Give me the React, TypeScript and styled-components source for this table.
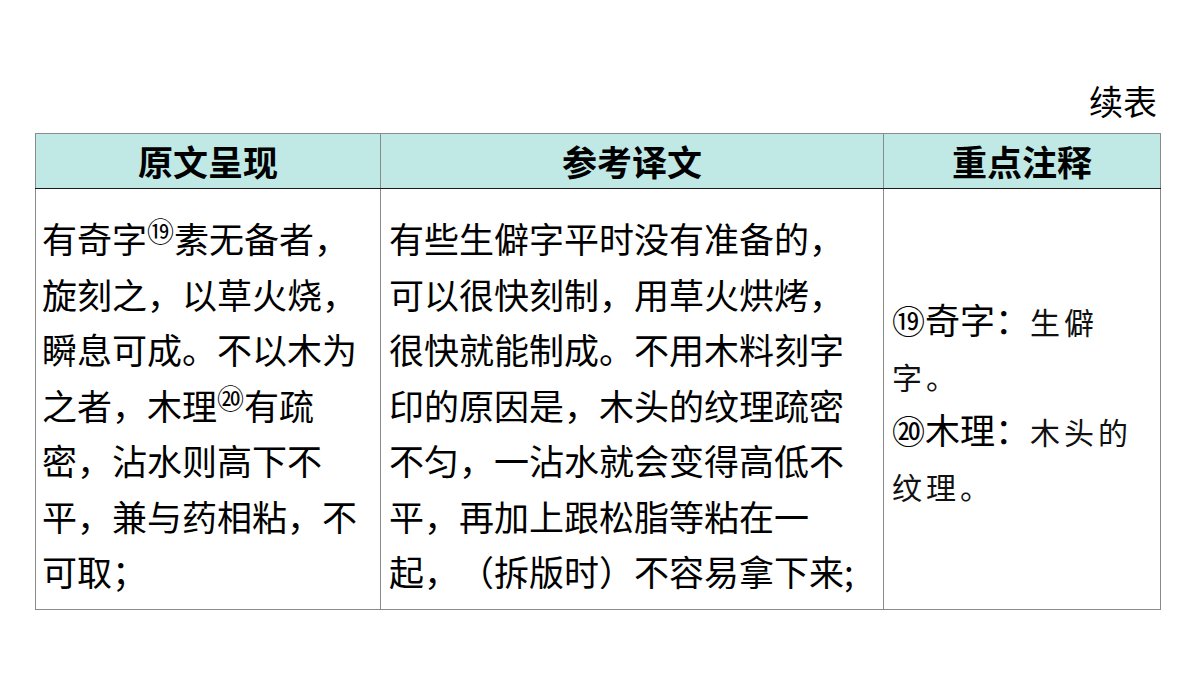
import * as React from 'react'
import styled, { createGlobalStyle } from 'styled-components'

const GlobalStyle = createGlobalStyle`
  html, body {
    margin: 0;
    padding: 0;
    background: #ffffff;
  }
  body {
    font-family: 'Noto Sans CJK SC', 'Noto Sans', sans-serif;
    color: #000000;
    text-spacing-trim: space-all;
  }
`

const Page = styled.div`
  width: 1200px;
  height: 675px;
  box-sizing: border-box;
  padding: 80px 40px 0 35px;
`

const Caption = styled.div`
  text-align: right;
  font-size: 34px;
  line-height: 42px;
  margin-bottom: 11px;
  margin-right: 3px;
`

const Table = styled.table`
  width: 1122px;
  border-collapse: collapse;
  table-layout: fixed;
`

const HeadCell = styled.th<{ $width: number }>`
  width: ${(p) => p.$width}px;
  height: 54px;
  padding: 0;
  background: #c0e9e6;
  border: 1.5px solid #8a8a8a;
  border-bottom: 1.5px solid #1a1a1a;
  font-size: 35px;
  font-weight: 700;
  line-height: 54px;
  text-align: center;
`

const BodyCell = styled.td<{ $middle?: boolean; $pad: number }>`
  height: 421px;
  box-sizing: border-box;
  padding: ${(p) => (p.$middle ? '4px' : '21px')} ${(p) => p.$pad}px 0;
  vertical-align: ${(p) => (p.$middle ? 'middle' : 'top')};
  border: 1.5px solid #8a8a8a;
  border-top: none;
  font-size: 35px;
  line-height: 55.5px;
`

const Line = styled.div`
  white-space: nowrap;
`

const NoteLine = styled.div`
  white-space: nowrap;
  height: 55px;
  line-height: 55px;
`

const Mark = styled.sup`
  font-family: 'DejaVu Serif', 'Liberation Serif', 'Noto Sans CJK SC', serif;
  font-size: 27px;
  line-height: 0;
  vertical-align: 11px;
`

const Num = styled.span`
  font-family: 'DejaVu Serif', 'Liberation Serif', 'Noto Sans CJK SC', serif;
  font-size: 33px;
  line-height: 1;
`

const Gloss = styled.span`
  font-size: 30px;
  font-weight: 400;
  letter-spacing: 4px;
  color: #111111;
  line-height: 1;
`

const original = [
  <>有奇字<Mark>⑲</Mark>素无备者，</>,
  '旋刻之，以草火烧，',
  '瞬息可成。不以木为',
  <>之者，木理<Mark>⑳</Mark>有疏</>,
  '密，沾水则高下不',
  '平，兼与药相粘，不',
  '可取；',
]

const translation = [
  '有些生僻字平时没有准备的，',
  '可以很快刻制，用草火烘烤，',
  '很快就能制成。不用木料刻字',
  '印的原因是，木头的纹理疏密',
  '不匀，一沾水就会变得高低不',
  '平，再加上跟松脂等粘在一',
  '起，（拆版时）不容易拿下来;',
]

const App = () => {
  return (
    <Page>
      <GlobalStyle />
      <Caption>续表</Caption>
      <Table>
        <thead>
          <tr>
            <HeadCell $width={344}>原文呈现</HeadCell>
            <HeadCell $width={502}>参考译文</HeadCell>
            <HeadCell $width={276}>重点注释</HeadCell>
          </tr>
        </thead>
        <tbody>
          <tr>
            <BodyCell $pad={6}>
              {original.map((l, i) => (
                <Line key={i}>{l}</Line>
              ))}
            </BodyCell>
            <BodyCell $pad={8}>
              {translation.map((l, i) => (
                <Line key={i}>{l}</Line>
              ))}
            </BodyCell>
            <BodyCell $pad={8} $middle>
              <NoteLine>
                <Num>⑲</Num>奇字：<Gloss>生僻</Gloss>
              </NoteLine>
              <NoteLine>
                <Gloss>字。</Gloss>
              </NoteLine>
              <NoteLine>
                <Num>⑳</Num>木理：<Gloss>木头的</Gloss>
              </NoteLine>
              <NoteLine>
                <Gloss>纹理。</Gloss>
              </NoteLine>
            </BodyCell>
          </tr>
        </tbody>
      </Table>
    </Page>
  )
}

export default App
